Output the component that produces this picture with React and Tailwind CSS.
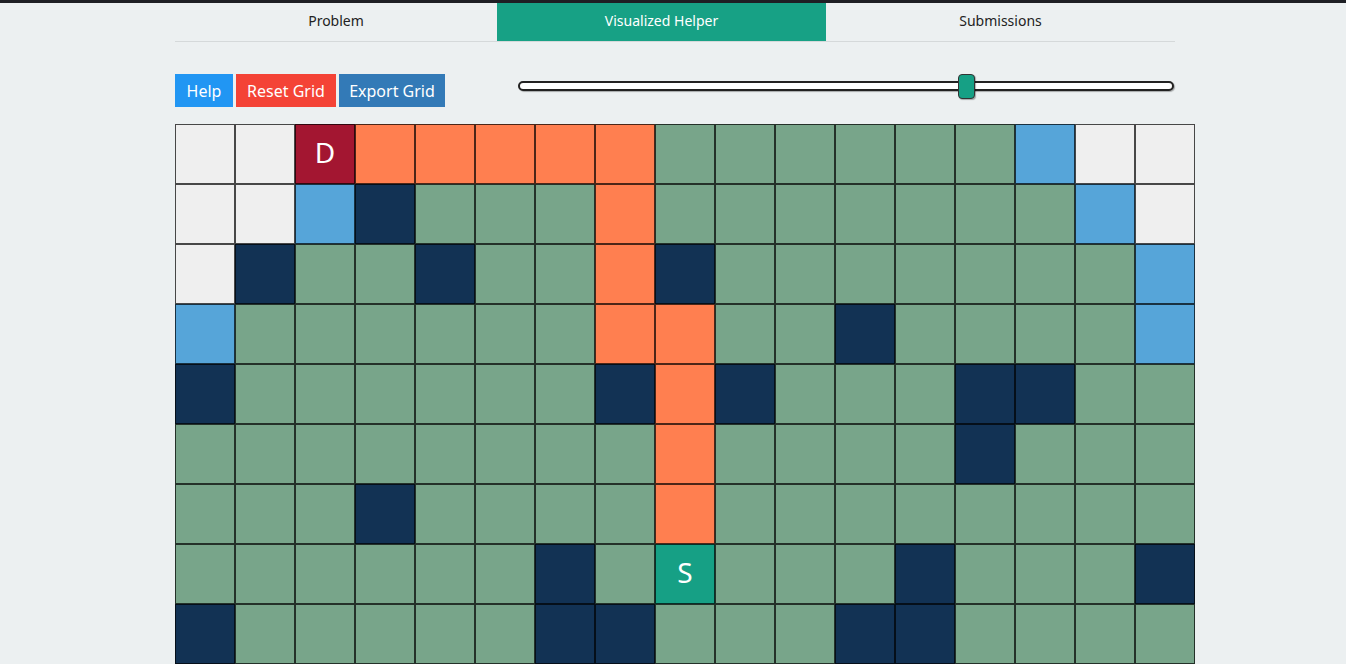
import React from "react";

const colour = {
  w: "bg-[#efefef]",
  g: "bg-[#78a58a]",
  k: "bg-[#123254]",
  o: "bg-[#ff7f50]",
  b: "bg-[#56a5d9]",
  D: "bg-[#a31631]",
  S: "bg-[#16a085]",
};

// grid rows, one letter per cell
const rows = [
  "wwDoooooggggggbww",
  "wwbkgggogggggggbw",
  "wkggkggokgggggggb",
  "bggggggooggkggggb",
  "kggggggkokgggkkgg",
  "ggggggggoggggkggg",
  "gggkggggogggggggg",
  "ggggggkgSgggkgggk",
  "kgggggkkgggkkgggg",
  "ggggggggggggggggg",
];

function Cell({ t }) {
  return (
    <div
      className={`${colour[t]} w-[60px] h-[60px] border border-black/70 flex items-center justify-center pb-[5px] text-white text-[28px] leading-none`}
    >
      {t === "D" || t === "S" ? t : null}
    </div>
  );
}

export default function App() {
  return (
    <div className="min-h-screen bg-[#ecf0f1] font-['Noto_Sans',sans-serif] overflow-hidden">
      <div className="h-[3px] bg-[#1e1f24]" />
      <div className="w-[1000px] ml-[175px]">
        {/* tabs */}
        <div className="flex border-b border-[#d5d9da] text-[14px] text-[#222]">
          <div className="w-[322px] h-[38px] flex items-center justify-center pb-[4px]">Problem</div>
          <div className="w-[329px] h-[38px] flex items-center justify-center pb-[4px] bg-[#17a185] text-white">
            Visualized Helper
          </div>
          <div className="flex-1 h-[38px] flex items-center justify-center pb-[4px]">Submissions</div>
        </div>

        {/* toolbar */}
        <div className="flex items-center mt-[32px]">
          <button className="w-[58px] h-[33px] bg-[#2196f3] text-white text-[16px]">Help</button>
          <button className="w-[100px] h-[33px] ml-[3px] bg-[#f44336] text-white text-[16px]">Reset Grid</button>
          <button className="w-[106px] h-[33px] ml-[3px] bg-[#337ab7] text-white text-[16px]">Export Grid</button>
          <div className="flex-1 ml-[73px] pr-px mb-[9px]">
            <div className="relative h-[10px] rounded-full bg-white border-2 border-[#222] shadow-[1px_1px_1px_rgba(0,0,0,0.3)]">
              <div className="absolute left-[438px] top-[-9px] w-[17px] h-[25px] rounded-[4px] bg-[#16a085] border border-[#333] shadow-[1px_1px_1px_rgba(0,0,0,0.3)]" />
            </div>
          </div>
        </div>

        {/* grid */}
        <div className="mt-[17px] w-[1020px] flex flex-col">
          {rows.map((r, i) => (
            <div key={i} className="flex">
              {r.split("").map((t, j) => (
                <Cell key={j} t={t} />
              ))}
            </div>
          ))}
        </div>
      </div>
    </div>
  );
}
